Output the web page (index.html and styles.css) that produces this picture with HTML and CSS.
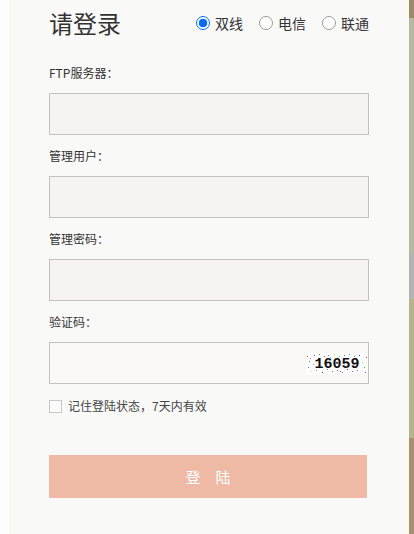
FILE: index.html
```html
<!DOCTYPE html>
<html lang="zh-CN">
<head>
<meta charset="utf-8">
<title>请登录</title>
<link rel="stylesheet" href="styles.css">
</head>
<body>
<div class="page">
  <div class="gutter"></div>
  <main class="card">
    <div class="head">
      <h1 class="title">请登录</h1>
      <div class="lines">
        <label class="opt"><input type="radio" name="line" checked><span>双线</span></label>
        <label class="opt"><input type="radio" name="line"><span>电信</span></label>
        <label class="opt"><input type="radio" name="line"><span>联通</span></label>
      </div>
    </div>
    <form class="form">
      <label class="lbl">FTP服务器：</label>
      <input class="inp" type="text">
      <label class="lbl">管理用户：</label>
      <input class="inp" type="text">
      <label class="lbl">管理密码：</label>
      <input class="inp" type="password">
      <label class="lbl">验证码：</label>
      <div class="captcha-box">
        <input class="cap-inp" type="text">
        <svg class="captcha" width="62" height="21" viewBox="0 0 62 21">
          <g>
            <rect x="1" y="3" width="1" height="1" fill="#e33"/>
            <rect x="3" y="8" width="1" height="1" fill="#2c2"/>
            <rect x="2" y="14" width="1" height="1" fill="#36f"/>
            <rect x="5" y="18" width="1" height="1" fill="#dd2"/>
            <rect x="8" y="2" width="1" height="1" fill="#c3c"/>
            <rect x="7" y="11" width="1" height="1" fill="#3cc"/>
            <rect x="10" y="17" width="1" height="1" fill="#f80"/>
            <rect x="13" y="1" width="1" height="1" fill="#3a3"/>
            <rect x="16" y="19" width="1" height="1" fill="#33f"/>
            <rect x="18" y="3" width="1" height="1" fill="#e3e"/>
            <rect x="21" y="16" width="1" height="1" fill="#2b2"/>
            <rect x="22" y="2" width="1" height="1" fill="#f33"/>
            <rect x="26" y="18" width="1" height="1" fill="#39f"/>
            <rect x="28" y="1" width="1" height="1" fill="#cc2"/>
            <rect x="31" y="17" width="1" height="1" fill="#c3c"/>
            <rect x="33" y="3" width="1" height="1" fill="#3c3"/>
            <rect x="36" y="19" width="1" height="1" fill="#f60"/>
            <rect x="38" y="2" width="1" height="1" fill="#36f"/>
            <rect x="41" y="16" width="1" height="1" fill="#e33"/>
            <rect x="43" y="1" width="1" height="1" fill="#2cc"/>
            <rect x="46" y="18" width="1" height="1" fill="#c3f"/>
            <rect x="48" y="3" width="1" height="1" fill="#3b3"/>
            <rect x="51" y="17" width="1" height="1" fill="#f3a"/>
            <rect x="53" y="2" width="1" height="1" fill="#33c"/>
            <rect x="56" y="9" width="1" height="1" fill="#dd2"/>
            <rect x="58" y="14" width="1" height="1" fill="#3c3"/>
            <rect x="60" y="4" width="1" height="1" fill="#f33"/>
            <rect x="59" y="19" width="1" height="1" fill="#c3c"/>
            <rect x="4" y="5" width="1" height="1" fill="#999"/>
            <rect x="24" y="4" width="1" height="1" fill="#3cf"/>
            <rect x="50" y="5" width="1" height="1" fill="#f90"/>
            <rect x="34" y="18" width="1" height="1" fill="#93f"/>
          </g>
          <text class="cap-text" x="31" y="15" text-anchor="middle">16059</text>
        </svg>
      </div>
      <label class="remember"><input type="checkbox" class="chk"><span>记住登陆状态，7天内有效</span></label>
      <button type="button" class="btn">登　陆</button>
    </form>
  </main>
  <div class="edge"></div>
</div>
</body>
</html>
```
FILE: styles.css
```css
* { box-sizing: border-box; }
html, body { margin: 0; padding: 0; }
body {
  background: #fdfdfd;
  font-family: "Noto Sans CJK SC", "Noto Sans", sans-serif;
  color: #333;
}
.page {
  display: flex;
  height: 534px;
  width: 414px;
  overflow: hidden;
}
.gutter { width: 9px; flex: none; background: #fdfdfd; }
.card {
  width: 400px;
  flex: none;
  background: #f9f9f8;
  padding: 8px 40px 0 40px;
}
.edge {
  width: 5px;
  flex: none;
  background: linear-gradient(to bottom,
    #9b8a68 0, #9b8a68 18px,
    #b5b8a0 18px, #b5b8a0 254px,
    #b3b3b3 254px, #b3b3b3 299px,
    #b5b489 299px, #b5b489 438px,
    #a69070 438px, #a69070 100%);
}
.head {
  width: 320px;
  height: 30px;
  display: flex;
  align-items: center;
  justify-content: space-between;
}
.title {
  margin: 0;
  font-size: 24px;
  line-height: 30px;
  font-weight: normal;
  color: #333;
}
.lines { display: flex; align-items: center; gap: 16px; }
.opt {
  display: flex;
  align-items: center;
  gap: 5px;
  font-size: 14px;
  line-height: 20px;
  color: #333;
}
.opt input {
  appearance: none;
  -webkit-appearance: none;
  margin: 0;
  width: 14px;
  height: 14px;
  border-radius: 50%;
  border: 1px solid #9c9c9c;
  background: #fff;
}
.opt input:checked {
  border-color: #0a6cf5;
  background: radial-gradient(circle, #0a6cf5 0, #0a6cf5 4px, #fff 4.6px);
}
.form { display: flex; flex-direction: column; margin-top: 26px; }
.lbl {
  display: block;
  font-size: 12px;
  line-height: 18px;
  color: #333;
}
.lbl + .inp, .lbl + .captcha-box { margin-top: 11px; }
.inp + .lbl { margin-top: 12px; }
.inp {
  width: 320px;
  height: 42px;
  border: 1px solid #c2c2c2;
  background: #f5f4f1;
  margin: 0;
  padding: 0 8px;
  font-size: 14px;
  outline: none;
}
.captcha-box {
  width: 320px;
  height: 42px;
  border: 1px solid #c2c2c2;
  background: #faf9f8;
  display: flex;
  align-items: center;
}
.cap-inp {
  flex: 1;
  min-width: 0;
  height: 100%;
  border: none;
  background: transparent;
  outline: none;
  padding: 0 8px;
}
.captcha { flex: none; display: block; background: #fff; }
.cap-text {
  font-family: "Liberation Mono", "DejaVu Sans Mono", monospace;
  font-weight: bold;
  font-size: 15px;
  fill: #111;
}
.remember {
  display: flex;
  align-items: center;
  margin-top: 13px;
  font-size: 12px;
  line-height: 18px;
  color: #444;
}
.chk {
  appearance: none;
  -webkit-appearance: none;
  margin: 0 6px 0 0;
  width: 13px;
  height: 13px;
  border: 1px solid #c8c8c8;
  background: #fbfbfb;
}
.btn {
  margin-top: 40px;
  width: 318px;
  height: 43px;
  border: none;
  background: #eeb9a5;
  color: #fff;
  font-family: "Noto Sans CJK SC", sans-serif;
  font-size: 15px;
  padding: 0;
  cursor: pointer;
}
```
